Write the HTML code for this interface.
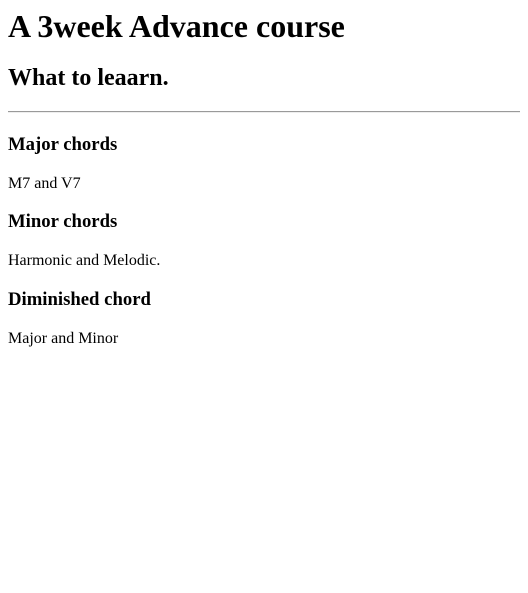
<!DOCTYPE html>
<html><head><meta charset="utf-8"><style>
html,body{background:#fff;}
body{margin:8px;font-family:"Liberation Serif",serif;color:#000;font-size:16px;}
h1{font-size:32px;margin:0;line-height:37px;}
h2{font-size:24px;margin:19px 0 0;line-height:28px;}
hr{margin:19px 0 0;border:0;border-top:1px solid #9a9a9a;border-bottom:1px solid #eee;height:0;}
h3{font-size:18.72px;margin:19px 0;line-height:22px;}
h3.first{margin-top:21px;}
p{margin:19px 0;line-height:17.4px;}
</style></head><body>
<h1>A 3week Advance course</h1>
<h2>What to leaarn.</h2>
<hr>
<h3 class="first">Major chords</h3>
<p>M7 and V7</p>
<h3>Minor chords</h3>
<p>Harmonic and Melodic.</p>
<h3>Diminished chord</h3>
<p>Major and Minor</p>
</body></html>
